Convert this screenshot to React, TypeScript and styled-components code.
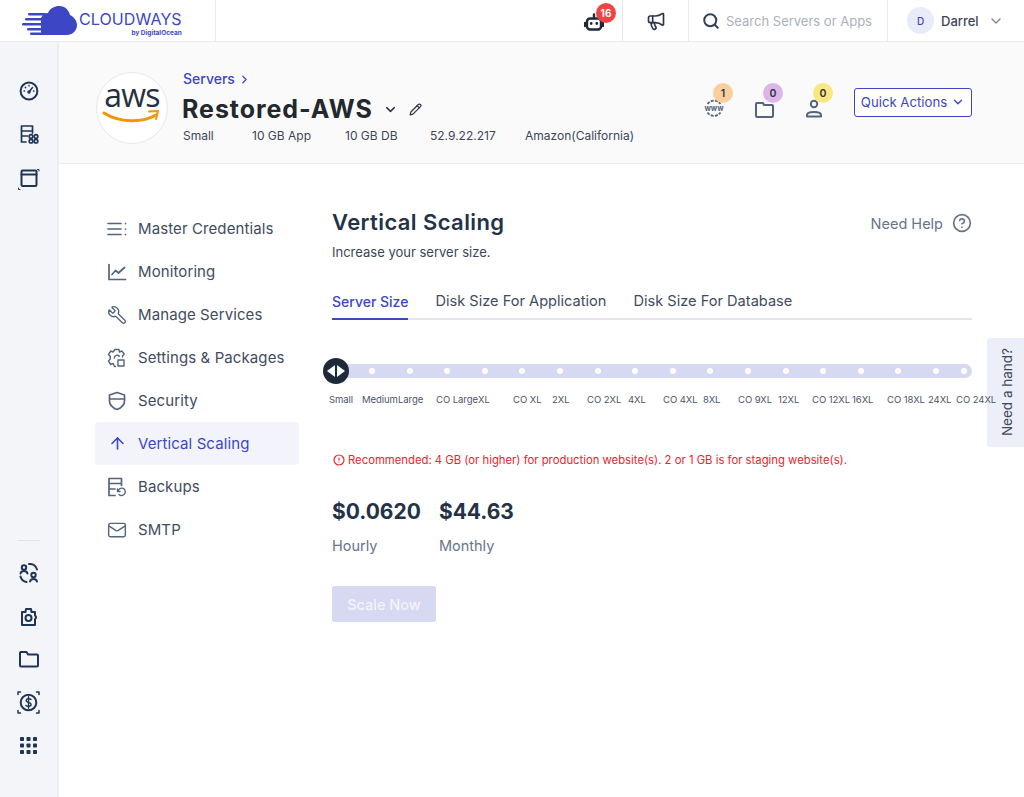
import React from "react";
import styled, { createGlobalStyle } from "styled-components";
import {
  ArrowUp,
  ChevronDown,
  ChevronRight,
  CircleAlert,
  CircleHelp,
  Mail,
  Megaphone,
  Pencil,
  Search,
  Wrench,
} from "lucide-react";

const GlobalStyle = createGlobalStyle`
  html, body {
    margin: 0;
    padding: 0;
    background: #ffffff;
  }
  body {
    font-family: "Inter", "Liberation Sans", sans-serif;
    color: #2b3648;
  }
`;

const Page = styled.div`
  position: relative;
  width: 1024px;
  height: 797px;
  overflow: hidden;
  display: flex;
  flex-direction: column;
`;

const TopBar = styled.header`
  display: flex;
  height: 41px;
  flex: none;
  border-bottom: 1px solid #e9ebee;
  background: #ffffff;
`;

const TopCell = styled.div<{ $w: number }>`
  position: relative;
  display: flex;
  align-items: center;
  flex: none;
  box-sizing: border-box;
  width: ${(p) => p.$w}px;
  border-right: 1px solid #e9ebee;
`;

const LogoCell = styled(TopCell)`
  padding-left: 21px;
  gap: 2px;
`;

const CenteredCell = styled(TopCell)`
  justify-content: center;
  color: #2b3648;
`;

const Spacer = styled.div`
  flex: 1;
`;

const LogoText = styled.div`
  display: flex;
  flex-direction: column;
  align-items: flex-end;
  color: #3d46c4;
  margin-top: 6px;
`;

const LogoName = styled.span`
  font-size: 16px;
  line-height: 19.5px;
  letter-spacing: 0.1px;
  font-weight: 400;
`;

const LogoBy = styled.span`
  font-size: 6.5px;
  line-height: 8.5px;
  font-weight: 700;
`;

const BotWrap = styled.span`
  display: flex;
  margin-top: 3px;
`;

const RedBadge = styled.span`
  position: absolute;
  left: 30px;
  top: 3px;
  width: 20px;
  height: 20px;
  border-radius: 50%;
  background: #ef4444;
  color: #ffffff;
  font-size: 10px;
  font-weight: 700;
  display: flex;
  align-items: center;
  justify-content: center;
`;

const SearchCell = styled(TopCell)`
  padding-left: 13px;
  gap: 6px;
  color: #2f4058;
`;

const SearchHint = styled.span`
  font-size: 13px;
  color: #a9b1bc;
`;

const UserCell = styled(TopCell)`
  padding-left: 19px;
  border-right: none;
  color: #3a4658;
`;

const Avatar = styled.span`
  width: 27px;
  height: 27px;
  border-radius: 50%;
  background: #e8ebf8;
  color: #3d46c4;
  font-size: 10px;
  font-weight: 500;
  display: flex;
  align-items: center;
  justify-content: center;
  margin-right: 7px;
`;

const UserName = styled.span`
  font-size: 13px;
  font-weight: 500;
  width: 47px;
`;

const Body = styled.div`
  flex: 1;
  display: flex;
  min-height: 0;
`;

const Rail = styled.aside`
  flex: none;
  box-sizing: border-box;
  width: 59px;
  background: #f3f5f8;
  border-right: 2px solid #eceef1;
  display: flex;
  flex-direction: column;
  justify-content: space-between;
  align-items: center;
  padding: 39px 0 43px;
  color: #1f3556;
`;

const RailGroup = styled.div`
  display: flex;
  flex-direction: column;
  align-items: center;
  gap: 23px;
`;

const RailRule = styled.div`
  width: 22px;
  height: 1px;
  background: #dfe2e6;
  margin-bottom: -2px;
`;

const Main = styled.main`
  flex: 1;
  display: flex;
  flex-direction: column;
  min-width: 0;
`;

const ServerHeader = styled.section`
  flex: none;
  box-sizing: border-box;
  height: 122px;
  display: flex;
  align-items: flex-start;
  padding: 30px 52px 0 37px;
  background: #fafafa;
  border-bottom: 1px solid #e9ebee;
`;

const AwsCircle = styled.div`
  flex: none;
  box-sizing: border-box;
  width: 72px;
  height: 72px;
  border-radius: 50%;
  background: #ffffff;
  border: 1px solid #e8e8e8;
  display: flex;
  flex-direction: column;
  align-items: center;
  padding-top: 7px;
  margin-right: 15px;
`;

const AwsWord = styled.span`
  font-family: "Open Sans", sans-serif;
  font-size: 32px;
  line-height: 30px;
  color: #252f3e;
  letter-spacing: -0.8px;
`;

const HeaderInfo = styled.div`
  flex: 1;
  display: flex;
  flex-direction: column;
`;

const Crumb = styled.span`
  display: flex;
  align-items: center;
  gap: 3px;
  font-size: 14px;
  line-height: 16px;
  font-weight: 500;
  color: #3d46c4;
  margin-top: -1px;
`;

const TitleRow = styled.div`
  display: flex;
  align-items: center;
  margin-top: 6px;
  margin-left: -1px;
  color: #2b3648;
`;

const ServerName = styled.h1`
  margin: 0 10px 0 0;
  font-size: 25px;
  line-height: 32px;
  font-weight: 700;
  letter-spacing: 0.95px;
  color: #23282f;
`;

const MetaRow = styled.div`
  display: flex;
  margin-top: 3px;
  font-size: 12px;
  line-height: 16px;
  color: #3a4658;
`;

const MetaItem = styled.span<{ $w: number }>`
  width: ${(p) => p.$w}px;
`;

const HeaderActions = styled.div`
  display: flex;
  align-items: flex-start;
  padding-top: 16px;
  color: #55657d;
`;

const CountIcon = styled.div`
  position: relative;
  width: 50px;
  height: 30px;
  display: flex;
  justify-content: center;
  align-items: flex-end;
`;

const CountBadge = styled.span<{ $bg: string }>`
  position: absolute;
  left: 24px;
  top: -5px;
  width: 20px;
  height: 20px;
  border-radius: 50%;
  background: ${(p) => p.$bg};
  color: #2b3648;
  font-size: 10.5px;
  font-weight: 600;
  display: flex;
  align-items: center;
  justify-content: center;
`;

const QuickButton = styled.button`
  box-sizing: border-box;
  width: 118px;
  height: 29px;
  margin-left: 15px;
  border: 1px solid #3d46c4;
  border-radius: 3px;
  background: #ffffff;
  color: #3d46c4;
  font: 400 13.2px "Inter", sans-serif;
  display: flex;
  align-items: center;
  justify-content: center;
  gap: 4px;
  padding: 0 0 2px;
`;

const Content = styled.div`
  flex: 1;
  display: flex;
  padding: 43px 52px 0 36px;
`;

const SideNav = styled.nav`
  flex: none;
  width: 204px;
  margin-right: 33px;
  display: flex;
  flex-direction: column;
`;

const NavRow = styled.a<{ $active?: boolean }>`
  height: 43px;
  display: flex;
  align-items: center;
  gap: 11px;
  padding-left: 12px;
  border-radius: 4px;
  font-size: 15px;
  letter-spacing: 0.1px;
  font-weight: 400;
  color: ${(p) => (p.$active ? "#3d46c4" : "#3f4c60")};
  background: ${(p) => (p.$active ? "#f2f3fb" : "transparent")};
`;

const NavLabel = styled.span`
  margin-top: -1px;
`;

const NavIcon = styled.span<{ $active?: boolean }>`
  width: 20px;
  height: 20px;
  display: flex;
  align-items: center;
  justify-content: center;
  color: ${(p) => (p.$active ? "#3d46c4" : "#56657c")};
`;

const Panel = styled.div`
  flex: 1;
  min-width: 0;
  display: flex;
  flex-direction: column;
`;

const PanelHead = styled.div`
  display: flex;
  justify-content: space-between;
  align-items: center;
`;

const PanelTitle = styled.h2`
  margin: 0;
  font-size: 22px;
  line-height: 30px;
  font-weight: 600;
  letter-spacing: 0.4px;
  color: #243247;
`;

const HelpLink = styled.span`
  display: flex;
  align-items: center;
  gap: 9px;
  margin-top: 2px;
  font-size: 14.5px;
  color: #66758a;
`;

const PanelSub = styled.p`
  margin: 7px 0 0;
  font-size: 13px;
  line-height: 16px;
  color: #3a4658;
`;

const Tabs = styled.div`
  display: flex;
  gap: 27px;
  margin-top: 32px;
  border-bottom: 2px solid #e3e5e8;
`;

const Tab = styled.span<{ $active?: boolean }>`
  font-size: ${(p) => (p.$active ? 14 : 14.6)}px;
  line-height: 19px;
  padding-bottom: 7px;
  margin-bottom: -2px;
  font-weight: ${(p) => (p.$active ? 500 : 400)};
  color: ${(p) => (p.$active ? "#3d46c4" : "#3f4c60")};
  border-bottom: 2px solid ${(p) => (p.$active ? "#3d46c4" : "transparent")};
`;

const SliderTrack = styled.div`
  position: relative;
  box-sizing: border-box;
  height: 14px;
  margin: 44px 0 0 6px;
  border-radius: 7px;
  background: #d7d8f2;
  display: flex;
  align-items: center;
  padding: 0 4px 0 31px;
  gap: 31.6px;
`;

const Dot = styled.span`
  flex: none;
  width: 6px;
  height: 6px;
  border-radius: 50%;
  background: #ffffff;

  &:last-child {
    margin-left: -9.6px;
  }
`;

const Knob = styled.span`
  position: absolute;
  left: -15px;
  top: -6px;
  width: 26px;
  height: 26px;
  border-radius: 50%;
  background: #1d2a3a;
  display: flex;
  align-items: center;
  justify-content: center;
  gap: 2px;
`;

const KnobArrow = styled.span<{ $right?: boolean }>`
  width: 0;
  height: 0;
  border-top: 6px solid transparent;
  border-bottom: 6px solid transparent;
  ${(p) => (p.$right ? "border-left: 8px solid #ffffff;" : "border-right: 8px solid #ffffff;")}
`;

const Scale = styled.div`
  position: relative;
  z-index: 2;
  display: flex;
  margin: 15px 0 0 -3px;
  width: 670px;
  white-space: nowrap;
`;

const ScaleLabel = styled.span<{ $w: number }>`
  flex: none;
  width: ${(p) => p.$w}px;
  font-size: 9.5px;
  line-height: 14px;
  letter-spacing: -0.05px;
  color: #4a566a;
`;

const Notice = styled.p`
  display: flex;
  align-items: center;
  gap: 3px;
  margin: 46px 0 0 1px;
  font-size: 11.3px;
  line-height: 14px;
  color: #e8262c;
`;

const Prices = styled.div`
  display: flex;
  gap: 18px;
  margin-top: 31px;
`;

const Price = styled.div`
  display: flex;
  flex-direction: column;
  gap: 10px;
`;

const PriceValue = styled.span`
  font-size: 21px;
  line-height: 28px;
  font-weight: 700;
  color: #243247;
`;

const PriceLabel = styled.span`
  font-size: 14.5px;
  line-height: 20px;
  color: #66758a;
`;

const ScaleButton = styled.button`
  align-self: flex-start;
  width: 104px;
  height: 36px;
  margin-top: 30px;
  border: none;
  border-radius: 3px;
  background: #d7d8f2;
  color: #f4f4fc;
  font: 500 14.5px "Inter", sans-serif;
`;

const HandTab = styled.div`
  position: absolute;
  z-index: 1;
  right: 0;
  top: 338px;
  width: 37px;
  height: 109px;
  box-sizing: border-box;
  padding-left: 3px;
  background: #eceef8;
  border-radius: 3px 0 0 3px;
  display: flex;
  align-items: center;
  justify-content: center;
  writing-mode: vertical-rl;
`;

const HandText = styled.span`
  transform: rotate(180deg);
  font-size: 13.5px;
  color: #3f4c60;
`;

const CloudLogo = () => (
  <svg width="56" height="30" viewBox="0 0 56 30" fill="#3d46c4">
    <path d="M20 29V12C22 8 25 7 27 7C29 2 34 0 38 0C45 0 48 5 49 9C53 11 56 15 56 19C56 25 51 29 46 29Z" />
    <rect x="7" y="7" width="18" height="2.6" rx="1.3" />
    <rect x="4" y="12" width="18" height="2.6" rx="1.3" />
    <rect x="1" y="17" width="21" height="2.6" rx="1.3" />
    <rect x="6" y="22" width="16" height="2.6" rx="1.3" />
    <rect x="9" y="26.4" width="13" height="2.6" rx="1.3" />
  </svg>
);

const line = {
  fill: "none",
  stroke: "currentColor",
  strokeWidth: 1.7,
  strokeLinecap: "round" as const,
  strokeLinejoin: "round" as const,
};

const rail = { ...line, strokeWidth: 2 };

const BotIcon = () => (
  <svg width="20" height="20" viewBox="0 0 20 20" fill="none" stroke="#1f2937" strokeWidth="2.4" strokeLinecap="round">
    <rect x="3" y="6.5" width="14" height="11" rx="3" />
    <path d="M10 6V2.5M1 11v3M19 11v3" />
    <circle cx="7.2" cy="11.5" r="0.7" fill="#1f2937" strokeWidth="1.4" />
    <circle cx="12.8" cy="11.5" r="0.7" fill="#1f2937" strokeWidth="1.4" />
  </svg>
);

const GaugeIcon = () => (
  <svg width="20" height="20" viewBox="0 0 20 20" {...rail}>
    <circle cx="10" cy="10" r="8.4" />
    <path d="M10 11l3.5-4.5M5 10h.5M10 4.5v.5M6.3 6.3l.4.4M14.5 10h.5" strokeWidth="1.5" />
    <circle cx="10" cy="11" r="1" strokeWidth="1.5" />
  </svg>
);

const ServerAppsIcon = () => (
  <svg width="20" height="20" viewBox="0 0 20 20" {...line}>
    <path d="M7 18H2.5V2h11v7M2.5 7h11M2.5 12h6" />
    <circle cx="12" cy="12.5" r="1.8" />
    <circle cx="17" cy="12.5" r="1.8" />
    <circle cx="12" cy="17.2" r="1.8" />
    <circle cx="17" cy="17.2" r="1.8" />
  </svg>
);

const WindowIcon = () => (
  <svg width="24" height="24" viewBox="0 0 24 24" {...rail}>
    <rect x="4.5" y="3.5" width="15" height="15.5" rx="1" />
    <path d="M4.5 7.5h15" />
    <path d="M22 4V2.5h-1.5M1.5 21v1.5H3" strokeWidth="1" />
  </svg>
);

const SwapUsersIcon = () => (
  <svg width="22" height="22" viewBox="0 0 22 22" {...rail}>
    <circle cx="6" cy="5.5" r="2.2" />
    <path d="M2.5 11.5c.5-1.800 2-2.500 3.500-2.500s3 .7 3.500 2.500" />
    <circle cx="15.5" cy="13" r="2.2" />
    <path d="M12 19.5c.5-1.800 2-2.500 3.500-2.500s3 .7 3.500 2.500" />
    <path d="M11 2c3.500-.3 7 1.500 8 5.500M2.500 14.500c.8 3 3 5 6 5.500" />
  </svg>
);

const PuzzleCameraIcon = () => (
  <svg width="20" height="20" viewBox="0 0 20 20" {...rail}>
    <path d="M2 5h3.5l.5-3h5l.5 3H15v3.5a2 2 0 0 1 0 3.500V18H2z" transform="translate(1 0)" />
    <circle cx="9.5" cy="11" r="3" />
  </svg>
);

const RailFolderIcon = () => (
  <svg width="20" height="18" viewBox="0 0 20 18" {...rail}>
    <path d="M1 3V15.5a1 1 0 0 0 1 1h16a1 1 0 0 0 1-1V5.5a1 1 0 0 0-1-1H9L7.5 2H1.5z" />
  </svg>
);

const DollarIcon = () => (
  <svg width="23" height="23" viewBox="0 0 23 23" {...rail}>
    <circle cx="11.5" cy="11.5" r="7.8" />
    <path d="M14 8.5c-.8-1-4.700-1.300-4.900 1 0 2.600 5 1.300 5 4 0 2.300-4.200 2-5.200 1M11.5 5.8v11.4" strokeWidth="1.4" />
    <path d="M1 3.5V1h2.5M19.5 1H22v2.5M1 19.5V22h2.5M22 19.5V22h-2.5" strokeWidth="1.5" />
  </svg>
);

const GridDotsIcon = () => (
  <svg width="17" height="17" viewBox="0 0 17 17" fill="#1f3556">
    {[0, 6.5, 13].flatMap((y) =>
      [0, 6.5, 13].map((x) => <rect key={`${x}-${y}`} x={x} y={y} width="4" height="4" rx="0.8" />)
    )}
  </svg>
);

const CredentialsIcon = () => (
  <svg width="20" height="20" viewBox="0 0 20 20" {...line}>
    <path d="M1 4.5h13M1 10h13M1 15.5h13M18.5 4.5v.1M18.5 10v.1M18.5 15.5v.1" />
  </svg>
);

const ChartIcon = () => (
  <svg width="20" height="20" viewBox="0 0 20 20" {...line}>
    <path d="M2 2.5V17.5H18.5" />
    <path d="M5 12.5l3.500-4 3 2.500L17.5 5.5" />
  </svg>
);

const GearBoxIcon = () => (
  <svg width="20" height="20" viewBox="0 0 20 20" {...line} strokeWidth={1.4}>
    <path d="M8 1.5h4l.5 2.500 2.300-1 2.400 3-1.700 2 .1 1M3.8 3l2.200 1L8 1.5M3.8 3L1.5 6.5 3.3 8.5 3.3 11 1.5 13l2.300 3.500 2.400-1L7.5 18.5h1" />
    <path d="M7.3 10a2.800 2.800 0 0 1 5-1.700" />
    <rect x="11" y="12" width="6" height="6" />
  </svg>
);

const ShieldIcon = () => (
  <svg width="20" height="20" viewBox="0 0 20 20" {...line}>
    <path d="M10 1.5l7.500 2.500v6c0 4-3.500 7-7.500 8.500C6 17 2.5 14 2.5 10V4z" />
    <path d="M2.8 8h14.400" />
  </svg>
);

const BackupIcon = () => (
  <svg width="20" height="20" viewBox="0 0 20 20" {...line}>
    <path d="M8 18.5H2V1.5h12.500v7M2 6.5h12.500M2 12h6" />
    <path d="M11 14a3.700 3.700 0 1 1 1 3.500M10.5 12v2.500h2.500" strokeWidth="1.4" />
  </svg>
);

const WwwIcon = () => (
  <svg width="20" height="20" viewBox="0 0 20 20" fill="none">
    <path d="M3.5 6a8 8 0 0 1 13 0M3.5 14.500a8 8 0 0 0 13 0" stroke="currentColor" strokeWidth="1.8" strokeDasharray="3 1.2" />
    <text x="10" y="12.5" textAnchor="middle" fontSize="7.5" fontWeight="700" fontFamily="Inter, sans-serif" fill="currentColor">www</text>
  </svg>
);

const FolderIcon = () => (
  <svg width="19" height="17" viewBox="0 0 19 17" {...line} strokeWidth={2}>
    <path d="M1 3v12a1 1 0 0 0 1 1h15a1 1 0 0 0 1-1V5a1 1 0 0 0-1-1H9L8 2H1.5z" />
  </svg>
);

const PersonIcon = () => (
  <svg width="16" height="19" viewBox="0 0 16 19" {...line} strokeWidth={2}>
    <circle cx="8" cy="5" r="3.2" />
    <path d="M1 17.5v-1.500c0-1.800 2-3 7-3s7 1.200 7 3v1.500z" />
  </svg>
);

const navItems = [
  { label: "Master Credentials", icon: <CredentialsIcon /> },
  { label: "Monitoring", icon: <ChartIcon /> },
  { label: "Manage Services", icon: <Wrench size={20} strokeWidth={1.6} style={{ transform: "scaleX(-1)" }} /> },
  { label: "Settings & Packages", icon: <GearBoxIcon /> },
  { label: "Security", icon: <ShieldIcon /> },
  { label: "Vertical Scaling", icon: <ArrowUp size={19} strokeWidth={2} />, active: true },
  { label: "Backups", icon: <BackupIcon /> },
  { label: "SMTP", icon: <Mail size={20} strokeWidth={1.7} /> },
];

// each width runs to the start of the next label
const scaleLabels: [string, number][] = [
  ["Small", 33],
  ["Medium", 36],
  ["Large", 38],
  ["CO Large", 42],
  ["XL", 35],
  ["CO XL", 39],
  ["2XL", 35],
  ["CO 2XL", 41],
  ["4XL", 35],
  ["CO 4XL", 40],
  ["8XL", 35],
  ["CO 9XL", 40],
  ["12XL", 34],
  ["CO 12XL", 40],
  ["16XL", 35],
  ["CO 18XL", 41],
  ["24XL", 28],
  ["CO 24XL", 40],
];

const dots = Array.from({ length: 17 }, (_, i) => i);

const App: React.FC = () => {
  return (
    <Page>
      <GlobalStyle />
      <TopBar>
        <LogoCell $w={216}>
          <CloudLogo />
          <LogoText>
            <LogoName>CLOUDWAYS</LogoName>
            <LogoBy>by DigitalOcean</LogoBy>
          </LogoText>
        </LogoCell>
        <Spacer />
        <CenteredCell $w={57}>
          <BotWrap>
            <BotIcon />
          </BotWrap>
          <RedBadge>16</RedBadge>
        </CenteredCell>
        <CenteredCell $w={66}>
          <Megaphone size={20} strokeWidth={2} />
        </CenteredCell>
        <SearchCell $w={199}>
          <Search size={18} strokeWidth={2.6} />
          <SearchHint>Search Servers or Apps</SearchHint>
        </SearchCell>
        <UserCell $w={136}>
          <Avatar>D</Avatar>
          <UserName>Darrel</UserName>
          <ChevronDown size={16} color="#7a8696" />
        </UserCell>
      </TopBar>

      <Body>
        <Rail>
          <RailGroup>
            <GaugeIcon />
            <ServerAppsIcon />
            <WindowIcon />
          </RailGroup>
          <RailGroup>
            <RailRule />
            <SwapUsersIcon />
            <PuzzleCameraIcon />
            <RailFolderIcon />
            <DollarIcon />
            <GridDotsIcon />
          </RailGroup>
        </Rail>

        <Main>
          <ServerHeader>
            <AwsCircle>
              <AwsWord>aws</AwsWord>
              <svg width="60" height="14" viewBox="0 0 60 14" fill="none">
                <path d="M2 3c16 10 38 10 52 2" stroke="#f79400" strokeWidth="3" strokeLinecap="round" />
                <path d="M47 1.5l9-.5-2 8" stroke="#f79400" strokeWidth="2" strokeLinecap="round" strokeLinejoin="round" />
              </svg>
            </AwsCircle>
            <HeaderInfo>
              <Crumb>
                Servers <ChevronRight size={13} strokeWidth={2.2} />
              </Crumb>
              <TitleRow>
                <ServerName>Restored-AWS</ServerName>
                <ChevronDown size={15} strokeWidth={2.4} style={{ marginRight: 11 }} />
                <Pencil size={13} strokeWidth={2.2} />
              </TitleRow>
              <MetaRow>
                <MetaItem $w={69}>Small</MetaItem>
                <MetaItem $w={93}>10 GB App</MetaItem>
                <MetaItem $w={85}>10 GB DB</MetaItem>
                <MetaItem $w={95}>52.9.22.217</MetaItem>
                <MetaItem $w={130}>Amazon(California)</MetaItem>
              </MetaRow>
            </HeaderInfo>
            <HeaderActions>
              <CountIcon>
                <WwwIcon />
                <CountBadge $bg="#fbcf9d">1</CountBadge>
              </CountIcon>
              <CountIcon>
                <FolderIcon />
                <CountBadge $bg="#dcb6eb">0</CountBadge>
              </CountIcon>
              <CountIcon>
                <PersonIcon />
                <CountBadge $bg="#fbe77f">0</CountBadge>
              </CountIcon>
              <QuickButton>
                Quick Actions <ChevronDown size={14} strokeWidth={2.4} />
              </QuickButton>
            </HeaderActions>
          </ServerHeader>

          <Content>
            <SideNav>
              {navItems.map((item) => (
                <NavRow key={item.label} $active={item.active}>
                  <NavIcon $active={item.active}>{item.icon}</NavIcon>
                  <NavLabel>{item.label}</NavLabel>
                </NavRow>
              ))}
            </SideNav>

            <Panel>
              <PanelHead>
                <PanelTitle>Vertical Scaling</PanelTitle>
                <HelpLink>
                  Need Help <CircleHelp size={20} strokeWidth={2} />
                </HelpLink>
              </PanelHead>
              <PanelSub>Increase your server size.</PanelSub>
              <Tabs>
                <Tab $active>Server Size</Tab>
                <Tab>Disk Size For Application</Tab>
                <Tab>Disk Size For Database</Tab>
              </Tabs>

              <SliderTrack>
                <Knob>
                  <KnobArrow />
                  <KnobArrow $right />
                </Knob>
                {dots.map((i) => (
                  <Dot key={i} />
                ))}
              </SliderTrack>
              <Scale>
                {scaleLabels.map(([text, w]) => (
                  <ScaleLabel key={text} $w={w}>
                    {text}
                  </ScaleLabel>
                ))}
              </Scale>

              <Notice>
                <CircleAlert size={12} strokeWidth={2.4} />
                Recommended: 4 GB (or higher) for production website(s). 2 or 1 GB is for staging website(s).
              </Notice>

              <Prices>
                <Price>
                  <PriceValue>$0.0620</PriceValue>
                  <PriceLabel>Hourly</PriceLabel>
                </Price>
                <Price>
                  <PriceValue>$44.63</PriceValue>
                  <PriceLabel>Monthly</PriceLabel>
                </Price>
              </Prices>

              <ScaleButton>Scale Now</ScaleButton>
            </Panel>
          </Content>
        </Main>
      </Body>

      <HandTab>
        <HandText>Need a hand?</HandText>
      </HandTab>
    </Page>
  );
};

export default App;
